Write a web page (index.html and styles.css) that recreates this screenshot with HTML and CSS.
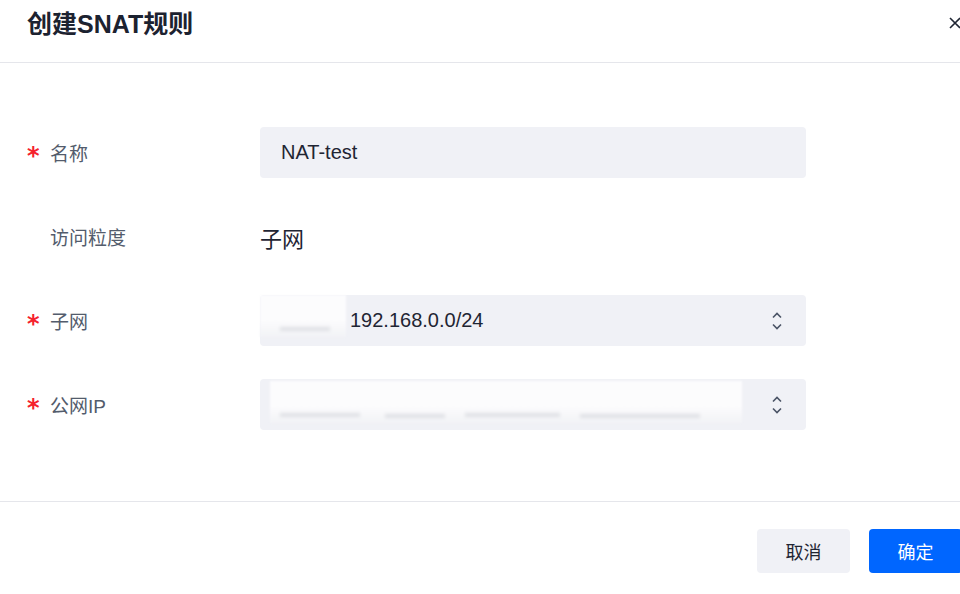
FILE: index.html
```html
<!DOCTYPE html>
<html>
<head>
    <meta charset="utf-8">
    <link rel="stylesheet" href="styles.css">
</head>
<body>
<div class="modal">
    <div class="modal-header">
        <h1 class="modal-title">创建SNAT规则</h1>
        <span class="modal-close">
            <svg width="14" height="14" viewBox="0 0 14 14"><path d="M2 2 L12 12 M12 2 L2 12" stroke="#1f2533" stroke-width="1.6" fill="none"/></svg>
        </span>
    </div>

    <form class="modal-body">
        <div class="form-item">
            <label class="form-label"><span class="required">*</span>名称</label>
            <div class="form-control input">NAT-test</div>
        </div>
        <div class="form-item">
            <label class="form-label"><span class="required blank">*</span>访问粒度</label>
            <div class="form-text">子网</div>
        </div>
        <div class="form-item">
            <label class="form-label"><span class="required">*</span>子网</label>
            <div class="form-control select">
                <div class="masked masked-short">
                    <span class="smudge" style="left: 20px; width: 50px; top: 32px"></span>
                </div>
                <span class="select-value">192.168.0.0/24</span>
                <span class="arrows">
                    <svg width="12" height="24" viewBox="0 0 12 24"><path d="M2 8.5 L6 4.5 L10 8.5 M2 15.5 L6 19.5 L10 15.5" stroke="#4a5365" stroke-width="1.6" fill="none"/></svg>
                </span>
            </div>
        </div>
        <div class="form-item">
            <label class="form-label"><span class="required">*</span>公网IP</label>
            <div class="form-control select">
                <div class="masked masked-long">
                    <span class="smudge" style="left: 10px; width: 80px; top: 32px"></span>
                    <span class="smudge" style="left: 115px; width: 60px; top: 33px"></span>
                    <span class="smudge" style="left: 195px; width: 95px; top: 32px"></span>
                    <span class="smudge" style="left: 310px; width: 120px; top: 33px"></span>
                </div>
                <span class="arrows">
                    <svg width="12" height="24" viewBox="0 0 12 24"><path d="M2 8.5 L6 4.5 L10 8.5 M2 15.5 L6 19.5 L10 15.5" stroke="#4a5365" stroke-width="1.6" fill="none"/></svg>
                </span>
            </div>
        </div>
    </form>

    <div class="modal-footer">
        <button type="button" class="btn btn-default">取消</button>
        <button type="button" class="btn btn-primary">确定</button>
    </div>
</div>
</body>
</html>
```

FILE: styles.css
```css
html, body {
    margin: 0;
    overflow: hidden;
    background: #fff;
}

body {
    font-family: "Liberation Sans", "Noto Sans CJK SC", sans-serif;
    color: #1f2533;
}

/* modal is a touch wider than the window: the right edge is cut off */
.modal {
    width: 962px;
}

.modal-header {
    display: flex;
    align-items: center;
    justify-content: space-between;
    height: 63px;
    padding: 0 0 0 27px;
    border-bottom: 1px solid #e5e6eb;
    box-sizing: border-box;
}

.modal-title {
    margin: 0 0 14px;
    font-size: 25px;
    font-weight: 700;
    line-height: 32px;
    color: #1c2230;
}

.modal-close {
    display: flex;
    margin-bottom: 16px;
}

.modal-body {
    display: flex;
    flex-direction: column;
    gap: 33px;
    padding: 64px 0 71px;
    border-bottom: 1px solid #e5e6eb;
}

.form-item {
    display: flex;
    align-items: center;
    height: 51px;
}

.form-label {
    display: flex;
    align-items: center;
    width: 233px;
    padding-left: 27px;
    font-size: 19px;
    color: #535c6c;
}

.required {
    width: 23px;
    color: #f5222d;
    font-family: "DejaVu Sans", sans-serif;
    font-size: 24px;
    font-weight: 700;
    line-height: 18px;
    padding-top: 7px;
}

.required.blank {
    visibility: hidden;
}

.form-control {
    display: flex;
    align-items: center;
    position: relative;
    width: 546px;
    height: 51px;
    box-sizing: border-box;
    background: #f0f1f6;
    border-radius: 4px;
    font-size: 20px;
    color: #1f2533;
}

.input {
    padding-left: 21px;
}

.form-text {
    font-size: 22px;
    color: #1f2533;
}

.select-value {
    margin-left: 4px;
}

.arrows {
    display: flex;
    margin-left: auto;
    margin-right: 23px;
}

/* blurred-out parts of the original screenshot */
.masked {
    position: relative;
    height: 42px;
    align-self: flex-start;
    background: linear-gradient(#fcfcfd 0, #fcfcfd 60%, #f2f3f6 100%);
    filter: blur(1px);
}

.masked-short {
    width: 86px;
}

.masked-long {
    width: 472px;
    margin-left: 10px;
    margin-top: 2px;
}

.smudge {
    position: absolute;
    height: 4px;
    background: #dfe0e5;
    filter: blur(1.5px);
}

.modal-footer {
    display: flex;
    justify-content: flex-end;
    gap: 19px;
    padding: 27px 0 0;
}

.btn {
    width: 93px;
    height: 44px;
    border: none;
    border-radius: 4px;
    font-family: "Noto Sans CJK SC", sans-serif;
    font-size: 18px;
}

.btn-default {
    background: #f0f1f6;
    color: #1f2533;
}

.btn-primary {
    background: #0066ff;
    color: #fff;
}
```
